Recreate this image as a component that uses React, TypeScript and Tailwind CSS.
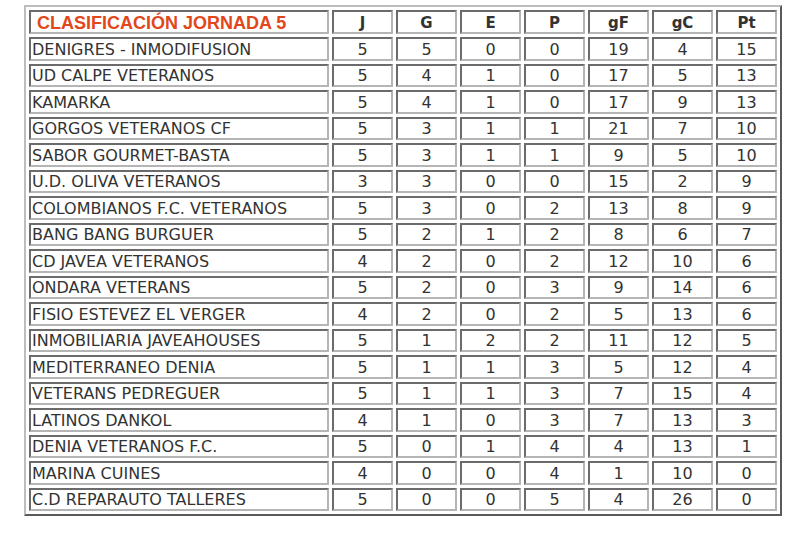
import React from 'react'

const rows: [string, number, number, number, number, number, number, number][] = [
  ['DENIGRES - INMODIFUSION', 5, 5, 0, 0, 19, 4, 15],
  ['UD CALPE VETERANOS', 5, 4, 1, 0, 17, 5, 13],
  ['KAMARKA', 5, 4, 1, 0, 17, 9, 13],
  ['GORGOS VETERANOS CF', 5, 3, 1, 1, 21, 7, 10],
  ['SABOR GOURMET-BASTA', 5, 3, 1, 1, 9, 5, 10],
  ['U.D. OLIVA VETERANOS', 3, 3, 0, 0, 15, 2, 9],
  ['COLOMBIANOS F.C. VETERANOS', 5, 3, 0, 2, 13, 8, 9],
  ['BANG BANG BURGUER', 5, 2, 1, 2, 8, 6, 7],
  ['CD JAVEA VETERANOS', 4, 2, 0, 2, 12, 10, 6],
  ['ONDARA VETERANS', 5, 2, 0, 3, 9, 14, 6],
  ['FISIO ESTEVEZ EL VERGER', 4, 2, 0, 2, 5, 13, 6],
  ['INMOBILIARIA JAVEAHOUSES', 5, 1, 2, 2, 11, 12, 5],
  ['MEDITERRANEO DENIA', 5, 1, 1, 3, 5, 12, 4],
  ['VETERANS PEDREGUER', 5, 1, 1, 3, 7, 15, 4],
  ['LATINOS DANKOL', 4, 1, 0, 3, 7, 13, 3],
  ['DENIA VETERANOS F.C.', 5, 0, 1, 4, 4, 13, 1],
  ['MARINA CUINES', 4, 0, 0, 4, 1, 10, 0],
  ['C.D REPARAUTO TALLERES', 5, 0, 0, 5, 4, 26, 0],
]

const heads = ['J', 'G', 'E', 'P', 'gF', 'gC', 'Pt']

const cell =
  'h-[23.5px] p-0 pt-[2px] border-2 border-t-[#6b6b6b] border-l-[#6b6b6b] border-b-[#b5b5b5] border-r-[#b5b5b5] leading-none'

export default function App() {
  return (
    <div className="w-[800px] h-[533px] bg-white pt-[5px] pl-[24px] font-['DejaVu_Sans',Verdana,sans-serif] text-[#333] text-[16px]">
      <table className="w-[758px] table-fixed border-separate border-spacing-x-[3px] border-spacing-y-[3px] border-2 border-t-[#bdbdbd] border-l-[#bdbdbd] border-b-[#5a5a5a] border-r-[#5a5a5a]">
        <colgroup>
          <col className="w-[300px]" />
          {heads.map((h) => (
            <col key={h} className="w-[61px]" />
          ))}
        </colgroup>
        <thead>
          <tr>
            <th className={cell + ' text-left pl-[6px]'}>
              <span className="font-['Liberation_Sans',Arial,sans-serif] font-bold text-[18px] text-[#e2471b]">
                CLASIFICACIÓN JORNADA 5
              </span>
            </th>
            {heads.map((h) => (
              <th key={h} className={cell + ' text-center font-bold text-[15px]'}>
                {h}
              </th>
            ))}
          </tr>
        </thead>
        <tbody>
          {rows.map(([name, ...nums]) => (
            <tr key={name}>
              <td className={cell + ' text-left pl-[1px]'}>{name}</td>
              {nums.map((n, i) => (
                <td key={i} className={cell + ' text-center'}>
                  {n}
                </td>
              ))}
            </tr>
          ))}
        </tbody>
      </table>
    </div>
  )
}
